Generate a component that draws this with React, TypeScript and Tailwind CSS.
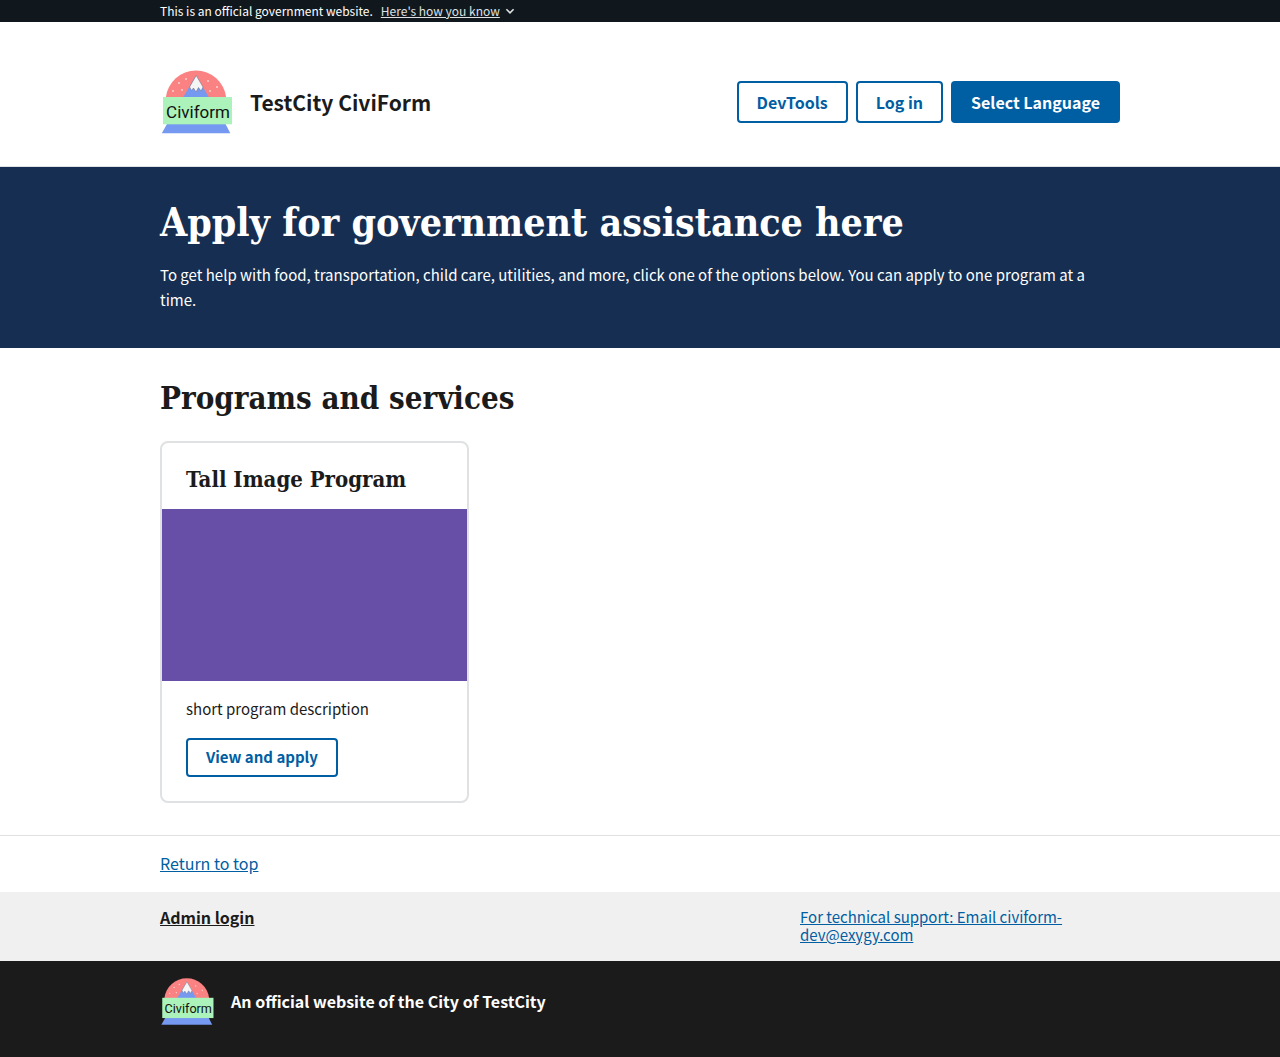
import React from 'react';

const snow = [
  [13, 22], [22, 21], [19, 14], [26, 10], [48, 12], [57, 18], [50, 22],
];

function Logo({ className }: { className: string }) {
  return (
    <svg viewBox="0 0 74 66" className={className} role="img" aria-label="CiviForm logo">
      <path d="M5.8 28.5 A30.4 30.4 0 0 1 66.2 28.5 Z" fill="#fa8282" />
      {snow.map(([x, y]) => (
        <circle key={`${x}-${y}`} cx={x} cy={y} r="0.9" fill="#fdd9d6" />
      ))}
      <path d="M23 28.5 L36 6.5 L49 28.5 Z" fill="#7598f0" />
      <path
        d="M36.2 6.5 L43 18 L41 22 L38.5 18.5 L36 23 L33.5 19 L31.5 21.5 L29.6 18 Z"
        fill="#f5f5f5"
        stroke="#6b6b78"
        strokeWidth="0.5"
        strokeLinejoin="round"
      />
      <path d="M7 55 H65.5 L70.3 64.3 H1.8 Z" fill="#7598f0" />
      <rect x="3" y="28" width="69" height="27.3" fill="#abf3ba" />
      <text x="38" y="48.6" textAnchor="middle" fontSize="17" fill="#111111" fontFamily="Roboto, sans-serif">
        Civiform
      </text>
    </svg>
  );
}

const serif = "font-['DejaVu_Serif_Condensed','DejaVu_Serif',serif]";
const outline =
  'cursor-pointer rounded border-2 border-[#005ea2] px-[18px] font-bold text-[#005ea2] whitespace-nowrap';

export default function App() {
  return (
    <div
      id="top"
      className="flex min-h-screen flex-col bg-white font-['Noto_Sans_CJK_SC',sans-serif] text-[15px] text-[#1b1b1b]"
    >
      <div className="bg-[#11181d] text-white">
        <div className="mx-auto flex h-[22px] max-w-[960px] items-center gap-2 text-xs leading-4">
          <p>This is an official government website.</p>
          <button type="button" className="flex cursor-pointer items-center gap-1 text-[#dfe1e2]">
            <span className="underline underline-offset-1">Here's how you know</span>
            <svg viewBox="0 0 12 12" className="size-3" fill="none" stroke="currentColor" strokeWidth="1.6">
              <path d="M2.4 4.2 L6 7.8 L9.6 4.2" />
            </svg>
          </button>
        </div>
      </div>

      <header className="border-b border-[#dfe1e2]">
        <div className="mx-auto flex h-36 max-w-[960px] items-center justify-between pt-4">
          <a href="#top" className="flex items-center gap-4">
            <Logo className="h-[66px] w-[74px]" />
            <span className="text-[21px] leading-7 font-bold">TestCity CiviForm</span>
          </a>
          <nav className="flex gap-2 text-base">
            <button type="button" className={`h-[42px] ${outline}`}>DevTools</button>
            <button type="button" className={`h-[42px] ${outline}`}>Log in</button>
            <button
              type="button"
              className="h-[42px] cursor-pointer rounded bg-[#005ea2] px-5 font-bold whitespace-nowrap text-white"
            >
              Select Language
            </button>
          </nav>
        </div>
      </header>

      <section className="bg-[#162e51] text-white">
        <div className="mx-auto max-w-[960px] pt-[31px] pb-9">
          <h1 className={`text-[39px] leading-[48px] font-bold ${serif}`}>Apply for government assistance here</h1>
          <p className="mt-4 leading-[25px]">
            To get help with food, transportation, child care, utilities, and more, click one of the options below. You
            can apply to one program at a time.
          </p>
        </div>
      </section>

      <main className="mx-auto w-full max-w-[960px] grow pt-7 pb-8">
        <h2 className={`text-[31px] leading-[44px] font-bold ${serif}`}>Programs and services</h2>
        <ul className="mt-[21px] grid grid-cols-3 gap-4">
          <li className="rounded-lg border-2 border-[#dfe1e2] pb-6">
            <h3 className={`px-6 pt-[23px] pb-[17px] text-[22px] leading-[26px] font-bold ${serif}`}>
              Tall Image Program
            </h3>
            <div className="h-[172px] bg-[#674ea7]" />
            <p className="px-6 pt-[15px] leading-[25px]">short program description</p>
            <div className="px-6 pt-[17px]">
              <button type="button" className={`block h-[39px] ${outline}`}>View and apply</button>
            </div>
          </li>
        </ul>
      </main>

      <footer>
        <div className="border-t border-[#dfe1e2]">
          <div className="mx-auto max-w-[960px] pt-[15px] pb-[17px] text-base leading-6">
            <a href="#top" className="text-[#005ea2] underline underline-offset-1">Return to top</a>
          </div>
        </div>
        <div className="bg-[#f0f0f0]">
          <div className="mx-auto grid max-w-[960px] grid-cols-3 pt-4 pb-[17px] leading-[18px]">
            <a href="#top" className="col-span-2 self-start justify-self-start text-base leading-[18px] font-bold underline underline-offset-1">
              Admin login
            </a>
            <a href="mailto:civiform-dev@exygy.com" className="text-[#005ea2] underline underline-offset-1">
              For technical support: Email civiform-dev@exygy.com
            </a>
          </div>
        </div>
        <div className="bg-[#1b1b1b] text-white">
          <div className="mx-auto flex h-24 max-w-[960px] items-center gap-4 pb-4">
            <Logo className="h-[49px] w-[55px]" />
            <p className="text-base font-bold">An official website of the City of TestCity</p>
          </div>
        </div>
      </footer>
    </div>
  );
}
